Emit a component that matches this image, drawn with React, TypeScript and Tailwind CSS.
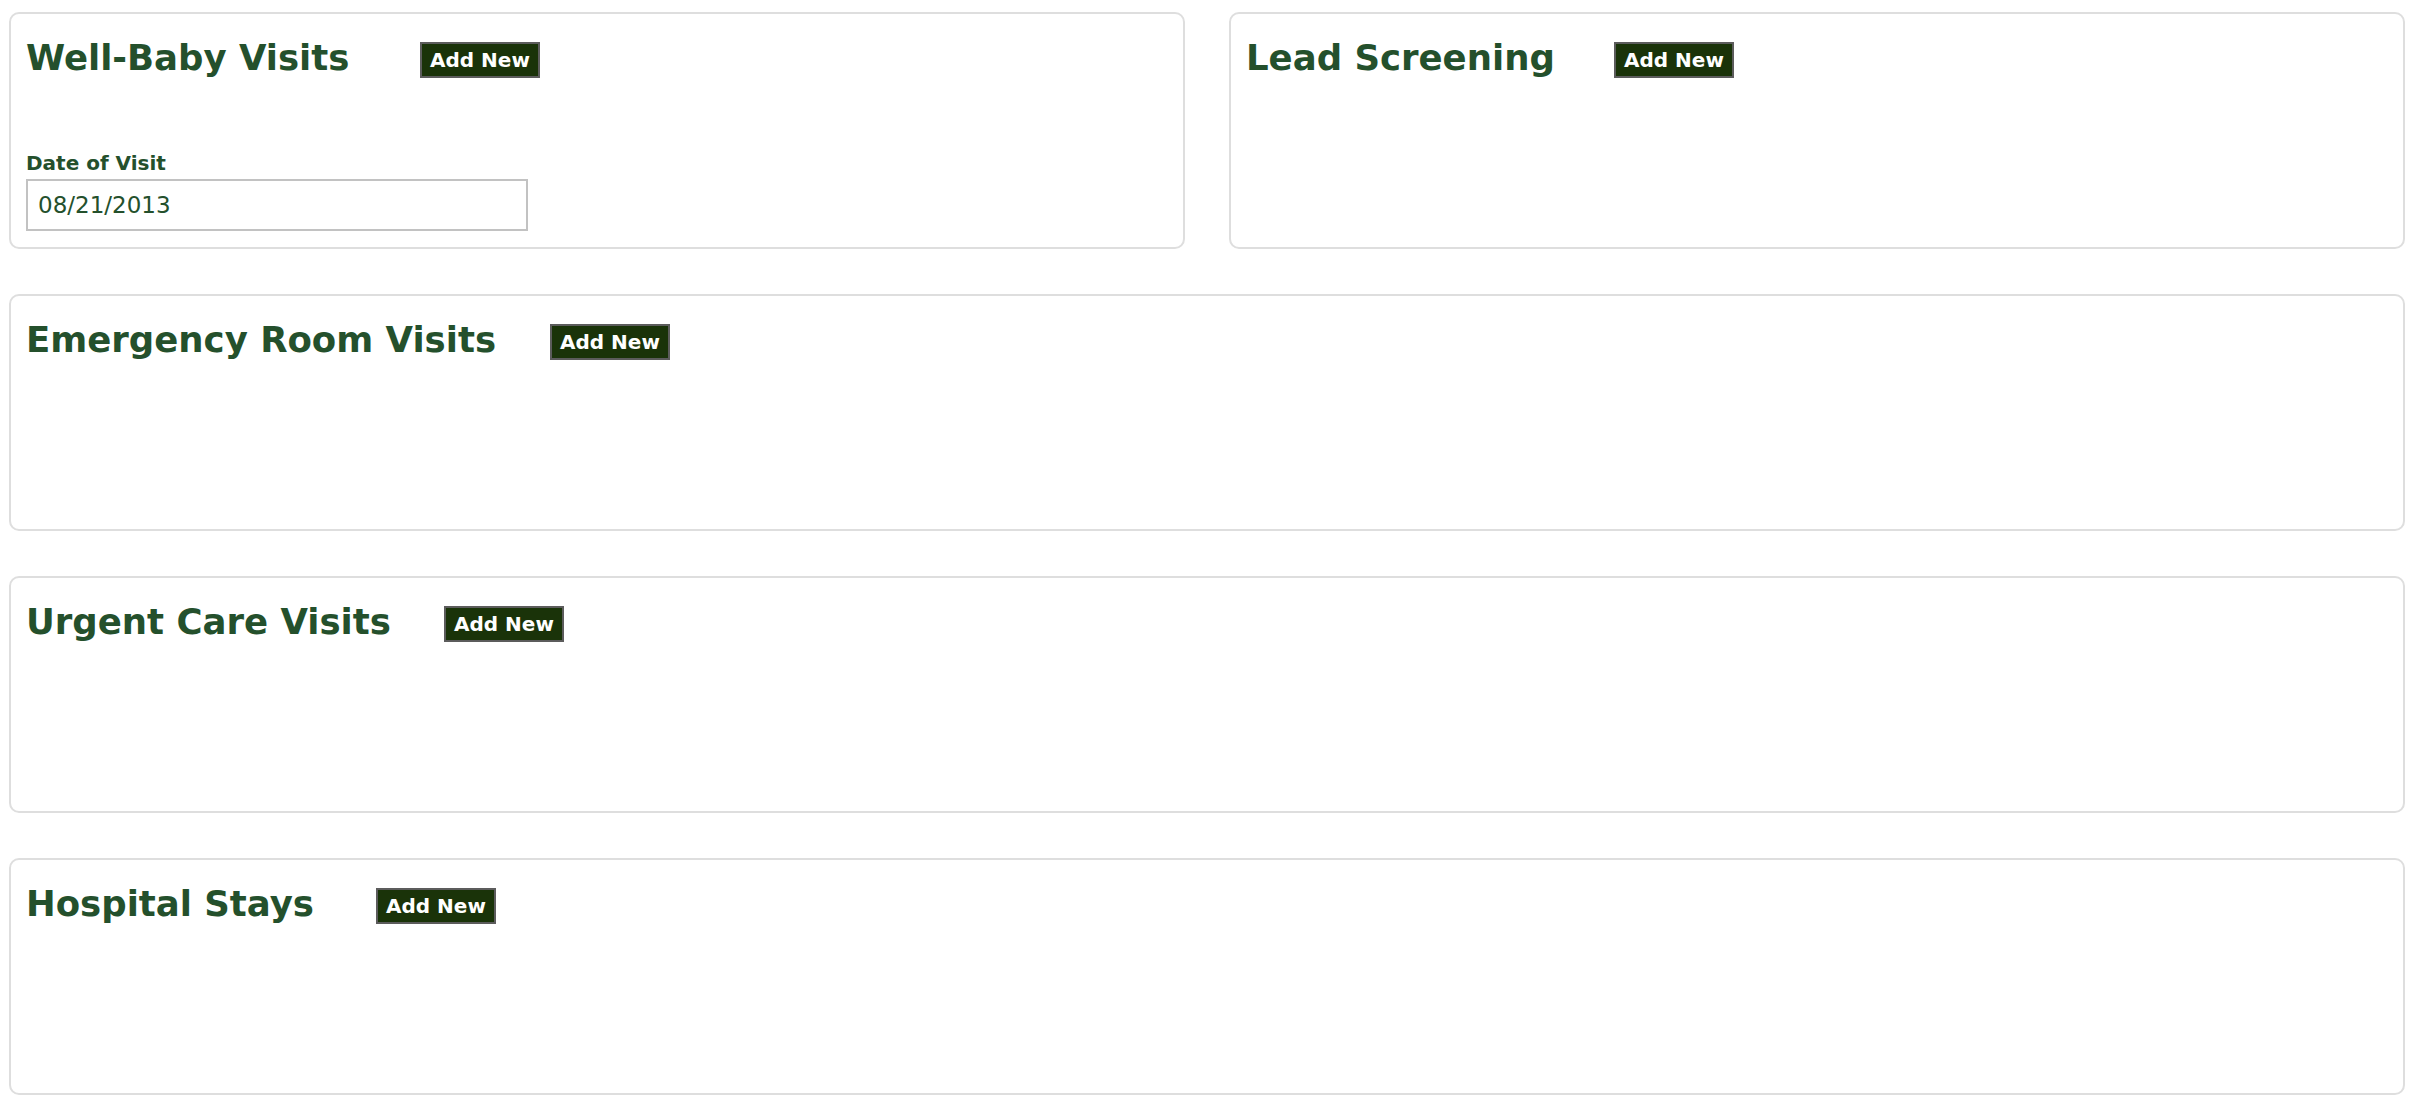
const panels = [
	{ title: 'Emergency Room Visits', titleBox: 'w-[524px]' },
	{ title: 'Urgent Care Visits', titleBox: 'w-[418px]' },
	{ title: 'Hospital Stays', titleBox: 'w-[350px]' },
]

function AddNew() {
	return (
		<button
			type="button"
			className="mt-[6px] h-[36px] whitespace-nowrap border-2 border-[#5c5c5c] bg-[#1a3309] px-[8px] text-[20px] font-bold leading-[32px] text-white"
		>
			Add New
		</button>
	)
}

function Header({ title, titleBox }: { title: string; titleBox: string }) {
	return (
		<div className="flex items-start">
			<div className={`shrink-0 ${titleBox}`}>
				<h2 className="whitespace-nowrap text-[35.5px] font-bold leading-[44px] text-[#24502c]">
					{title}
				</h2>
			</div>
			<AddNew />
		</div>
	)
}

export default function App() {
	return (
		<div className="min-h-[1120px] bg-white pt-[12px] font-['DejaVu_Sans','Liberation_Sans',sans-serif]">
			<div className="ml-[9px] flex w-[2396px] flex-col gap-[45px]">
				<div className="flex justify-between">
					<section className="h-[237px] w-[1176px] rounded-[10px] border-2 border-[#dedede] px-[15px] pt-[22px]">
						<Header title="Well-Baby Visits" titleBox="w-[394px]" />
						<div className="mt-[71px] flex flex-col gap-[4px]">
							<label className="text-[20px] font-bold leading-[24px] text-[#24502c]">
								Date of Visit
							</label>
							<input
								type="text"
								defaultValue="08/21/2013"
								className="h-[52px] w-[502px] border-2 border-[#c2c2c2] bg-white pl-[10px] text-[23px] text-[#24502c] outline-none"
							/>
						</div>
					</section>
					<section className="h-[237px] w-[1176px] rounded-[10px] border-2 border-[#dedede] px-[15px] pt-[22px]">
						<Header title="Lead Screening" titleBox="w-[368px]" />
					</section>
				</div>
				{panels.map((p) => (
					<section
						key={p.title}
						className="h-[237px] rounded-[10px] border-2 border-[#dedede] px-[15px] pt-[22px]"
					>
						<Header title={p.title} titleBox={p.titleBox} />
					</section>
				))}
			</div>
		</div>
	)
}
